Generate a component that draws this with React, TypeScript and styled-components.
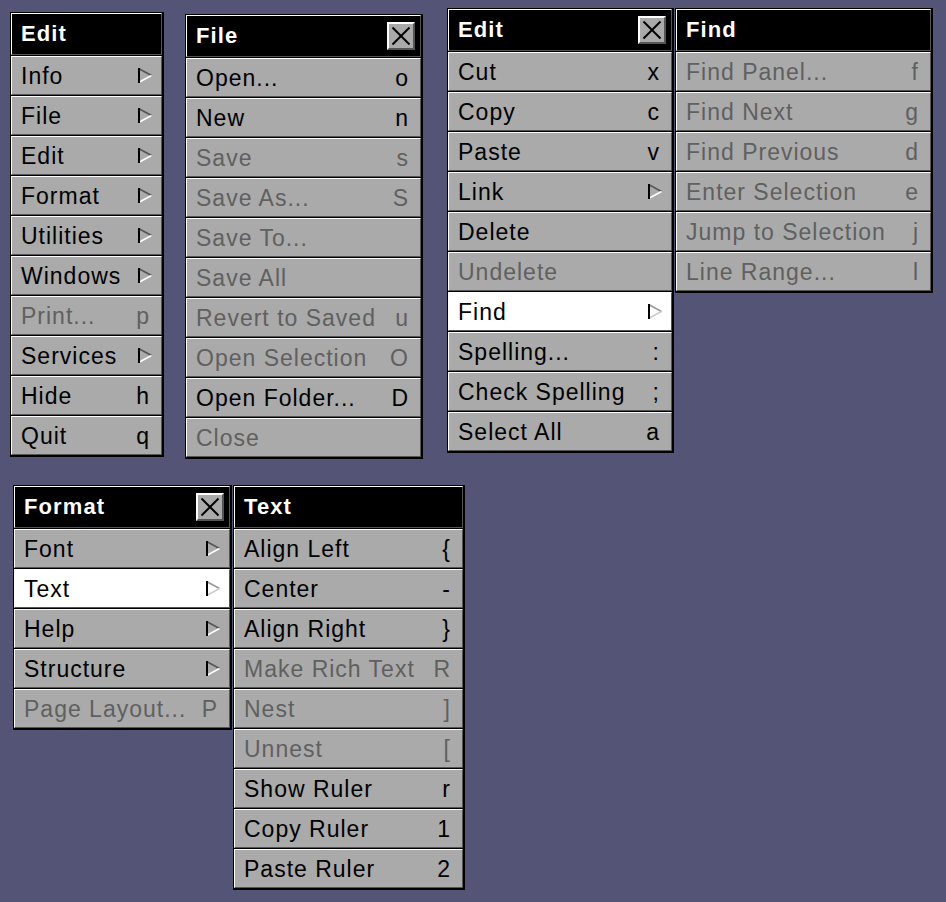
import React from "react";
import styled, { createGlobalStyle } from "styled-components";

const Global = createGlobalStyle`
  html, body { margin: 0; padding: 0; background: #545477; }
  body { width: 946px; height: 902px; overflow: hidden; }
  #root { width: 946px; height: 902px; }
`;

const Desktop = styled.div`
  position: relative;
  width: 946px;
  height: 902px;
  background: #545477;
  font-family: "Liberation Sans", Arial, sans-serif;
`;

const MenuWindow = styled.div<{ $left: number; $top: number; $width: number }>`
  position: absolute;
  left: ${(p) => p.$left}px;
  top: ${(p) => p.$top}px;
  width: ${(p) => p.$width}px;
  box-sizing: border-box;
  display: flex;
  flex-direction: column;
  gap: 1px;
  background: #000;
  padding: 1px 2px 2px 1px;
`;

const TitleBar = styled.div`
  height: 42px;
  box-sizing: border-box;
  display: flex;
  align-items: center;
  justify-content: space-between;
  background: #000;
  border-top: 1px solid #fff;
  border-left: 1px solid #fff;
  border-bottom: 1px solid #555;
  border-right: 1px solid #555;
  padding: 0 5px 0 9px;
  color: #fff;
  font-weight: bold;
  font-size: 22px;
  letter-spacing: 1.1px;
`;

const CloseBox = styled.div`
  width: 28px;
  height: 28px;
  box-sizing: border-box;
  background: #aaa;
  border-top: 2px solid #fff;
  border-left: 2px solid #fff;
  border-bottom: 2px solid #555;
  border-right: 2px solid #555;
  display: flex;
  align-items: center;
  justify-content: center;
`;

const Item = styled.div<{ $highlight?: boolean; $disabled?: boolean }>`
  height: 39px;
  box-sizing: border-box;
  display: flex;
  align-items: center;
  justify-content: space-between;
  background: ${(p) => (p.$highlight ? "#fff" : "#aaa")};
  border-top: 1px solid #fff;
  border-left: 1px solid #fff;
  border-bottom: 1px solid #555;
  border-right: 1px solid #555;
  padding: 0 11px 0 9px;
  color: ${(p) => (p.$disabled ? "#606060" : "#000")};
  font-size: 23px;
  letter-spacing: 1px;
  white-space: nowrap;
`;

const Label = styled.span`
  padding-top: 1px;
`;

const Key = styled.span`
  padding-top: 1px;
`;

const ArrowWrap = styled.span`
  display: flex;
  margin-right: -2px;
`;

const Arrow = ({ light }: { light?: boolean }) => (
  <ArrowWrap>
    <svg width="14" height="15" viewBox="0 0 14 15">
      <polygon points="1,0 14,7.5 1,15" fill={light ? "#fff" : "#aaa"} />
      <line x1="1.5" y1="1" x2="13.5" y2="7.5" stroke={light ? "#999" : "#555"} strokeWidth="1.5" />
      <line x1="1.5" y1="14" x2="13.5" y2="7.5" stroke={light ? "#ccc" : "#fff"} strokeWidth="1.5" />
      <line x1="1" y1="0" x2="1" y2="15" stroke="#000" strokeWidth="2" />
    </svg>
  </ArrowWrap>
);

const CloseX = () => (
  <CloseBox>
    <svg width="22" height="22" viewBox="0 0 22 22">
      <line x1="2.5" y1="2.5" x2="19.5" y2="19.5" stroke="#000" strokeWidth="2" />
      <line x1="19.5" y1="2.5" x2="2.5" y2="19.5" stroke="#000" strokeWidth="2" />
    </svg>
  </CloseBox>
);

type Entry = { label: string; key?: string; sub?: boolean; dis?: boolean; hi?: boolean };
type MenuDef = { title: string; close?: boolean; left: number; top: number; width: number; items: Entry[] };

const menus: MenuDef[] = [
  {
    title: "Edit",
    left: 10,
    top: 12,
    width: 154,
    items: [
      { label: "Info", sub: true },
      { label: "File", sub: true },
      { label: "Edit", sub: true },
      { label: "Format", sub: true },
      { label: "Utilities", sub: true },
      { label: "Windows", sub: true },
      { label: "Print...", key: "p", dis: true },
      { label: "Services", sub: true },
      { label: "Hide", key: "h" },
      { label: "Quit", key: "q" },
    ],
  },
  {
    title: "File",
    close: true,
    left: 185,
    top: 14,
    width: 238,
    items: [
      { label: "Open...", key: "o" },
      { label: "New", key: "n" },
      { label: "Save", key: "s", dis: true },
      { label: "Save As...", key: "S", dis: true },
      { label: "Save To...", dis: true },
      { label: "Save All", dis: true },
      { label: "Revert to Saved", key: "u", dis: true },
      { label: "Open Selection", key: "O", dis: true },
      { label: "Open Folder...", key: "D" },
      { label: "Close", dis: true },
    ],
  },
  {
    title: "Edit",
    close: true,
    left: 447,
    top: 8,
    width: 227,
    items: [
      { label: "Cut", key: "x" },
      { label: "Copy", key: "c" },
      { label: "Paste", key: "v" },
      { label: "Link", sub: true },
      { label: "Delete" },
      { label: "Undelete", dis: true },
      { label: "Find", sub: true, hi: true },
      { label: "Spelling...", key: ":" },
      { label: "Check Spelling", key: ";" },
      { label: "Select All", key: "a" },
    ],
  },
  {
    title: "Find",
    left: 675,
    top: 8,
    width: 258,
    items: [
      { label: "Find Panel...", key: "f", dis: true },
      { label: "Find Next", key: "g", dis: true },
      { label: "Find Previous", key: "d", dis: true },
      { label: "Enter Selection", key: "e", dis: true },
      { label: "Jump to Selection", key: "j", dis: true },
      { label: "Line Range...", key: "l", dis: true },
    ],
  },
  {
    title: "Format",
    close: true,
    left: 13,
    top: 485,
    width: 219,
    items: [
      { label: "Font", sub: true },
      { label: "Text", sub: true, hi: true },
      { label: "Help", sub: true },
      { label: "Structure", sub: true },
      { label: "Page Layout...", key: "P", dis: true },
    ],
  },
  {
    title: "Text",
    left: 233,
    top: 485,
    width: 232,
    items: [
      { label: "Align Left", key: "{" },
      { label: "Center", key: "-" },
      { label: "Align Right", key: "}" },
      { label: "Make Rich Text", key: "R", dis: true },
      { label: "Nest", key: "]", dis: true },
      { label: "Unnest", key: "[", dis: true },
      { label: "Show Ruler", key: "r" },
      { label: "Copy Ruler", key: "1" },
      { label: "Paste Ruler", key: "2" },
    ],
  },
];

export default function App() {
  return (
    <Desktop>
      <Global />
      {menus.map((m, i) => (
        <MenuWindow key={i} $left={m.left} $top={m.top} $width={m.width}>
          <TitleBar>
            <span>{m.title}</span>
            {m.close && <CloseX />}
          </TitleBar>
          {m.items.map((it, j) => (
            <Item key={j} $highlight={it.hi} $disabled={it.dis}>
              <Label>{it.label}</Label>
              {it.sub ? <Arrow light={it.hi} /> : it.key ? <Key>{it.key}</Key> : null}
            </Item>
          ))}
        </MenuWindow>
      ))}
    </Desktop>
  );
}
